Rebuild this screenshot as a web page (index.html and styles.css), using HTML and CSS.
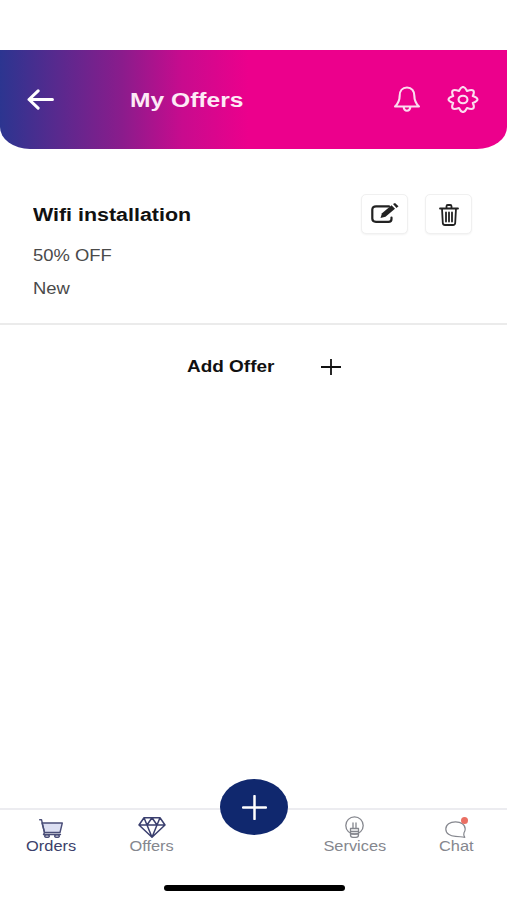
FILE: index.html
```html
<!DOCTYPE html>
<html lang="en">
<head>
<meta charset="utf-8">
<title>My Offers</title>
<link rel="stylesheet" href="styles.css">
</head>
<body>
<div class="screen">
  <header class="header">
    <svg class="back" viewBox="0 0 28 22" fill="none" stroke="#fff" stroke-width="3.200" stroke-linecap="round" stroke-linejoin="round"><path d="M2 11H26.500M11.500 2L2 11L11.500 20"/></svg>
    <h1 class="title">My Offers</h1>
    <div class="header-icons">
      <svg class="bell" viewBox="0 0 28 28" fill="none" stroke="#fbdcef" stroke-width="2.200" stroke-linecap="round" stroke-linejoin="round"><path d="M14 1.500C9 1.500 6.400 5.300 6.400 10C6.400 15.500 4.800 18 1.600 21.300H26.400C23.200 18 21.600 15.500 21.600 10C21.600 5.300 19 1.500 14 1.500ZM10.500 21.600C10.800 24.200 12 25.600 14 25.600C16 25.600 17.200 24.200 17.500 21.600"/></svg>
      <svg class="gear" viewBox="0 0 32 28" fill="none" stroke="#fbdcef" stroke-width="2.200" stroke-linejoin="round"><path d="M26.200 17.600Q30 26.200 20.200 22.800Q16 31.200 11.800 22.800Q2 26.200 5.800 17.600Q-3.800 14 5.800 10.400Q2 1.800 11.800 5.200Q16 -3.200 20.200 5.200Q30 1.800 26.200 10.400Q35.800 14 26.200 17.600Z"/><ellipse cx="16" cy="14" rx="4.600" ry="3.900"/></svg>
    </div>
  </header>

  <main class="content">
    <section class="offer">
      <div class="offer-info">
        <h2 class="offer-name">Wifi installation</h2>
        <p class="offer-line">50% OFF</p>
        <p class="offer-line">New</p>
      </div>
      <div class="offer-actions">
        <button class="icon-btn" aria-label="Edit">
          <svg class="edit-icon" viewBox="0 0 28 20" fill="none"><path d="M20.500 14.500V16C20.500 17.800 19.300 18.800 17.500 18.800H5C2.800 18.800 1.300 17.500 1.300 15.500V6.500C1.300 4.500 2.800 3.300 5 3.300H18" stroke="#222" stroke-width="2.200" stroke-linecap="round"/><path d="M9.500 15L11 10.200L20.500 2.300L24 5.800L14.500 13.800Z" fill="#222"/><path d="M22 1L24 0L27.500 3.200L25.500 5Z" fill="#222"/></svg>
        </button>
        <button class="icon-btn" aria-label="Delete">
          <svg class="trash-icon" viewBox="0 0 20 22" fill="none" stroke="#222" stroke-width="1.800" stroke-linecap="round" stroke-linejoin="round"><path d="M1 4.500H19M7.500 4.500V2.300C7.500 1.500 8 1 8.800 1H11.200C12 1 12.500 1.500 12.500 2.300V4.500M3 4.500L3.800 19C3.900 20.300 4.700 21 6 21H14C15.300 21 16.100 20.300 16.200 19L17 4.500M7 8.500V17.500M10 8.500V17.500M13 8.500V17.500"/></svg>
        </button>
      </div>
    </section>
    <button class="add-offer">
      <span class="add-label">Add Offer</span>
      <svg class="add-plus" viewBox="0 0 20 16" stroke="#111" stroke-width="1.800" fill="none"><path d="M0 8H20M10 0V16"/></svg>
    </button>
  </main>

  <nav class="tabbar">
    <a class="tab tab-active">
      <span class="glyph">
        <svg class="cart" viewBox="0 0 24 19" fill="none" stroke="#4a4e78" stroke-width="1.400" stroke-linecap="round" stroke-linejoin="round"><path d="M3 4H23.300L21 13.500H5.500Z" fill="#dcdff2"/><path d="M.7 .7H2.500L5.500 13.500L4.500 15.500H21.500"/><ellipse cx="8" cy="17" rx="2.300" ry="1.300"/><ellipse cx="18" cy="17" rx="2.300" ry="1.300"/></svg>
      </span>
      <span class="tab-label">Orders</span>
    </a>
    <a class="tab">
      <span class="glyph">
        <svg class="diamond" viewBox="0 0 28 21" fill="none" stroke="#3a3f6e" stroke-width="1.500" stroke-linejoin="round"><path d="M6 .8H22L27 8L14 20.300L1 8ZM1 8H27M6 .8L9 8L14 20.300L19 8L22 .8M9 8L14 .8L19 8"/></svg>
      </span>
      <span class="tab-label">Offers</span>
    </a>
    <div class="tab-spacer"></div>
    <a class="tab">
      <span class="glyph">
        <svg class="bulb" viewBox="0 0 19 22" fill="none" stroke="#85878e" stroke-width="1.300" stroke-linecap="round" stroke-linejoin="round"><circle cx="9.500" cy="9.500" r="8.700"/><path d="M5.500 12.500H13.500V19C13.500 20.300 12.500 21.300 11 21.300H8C6.500 21.300 5.500 20.300 5.500 19ZM5.500 15.500H13.500M5.500 18H13.500M8 7V12.500M11 7V12.500"/></svg>
      </span>
      <span class="tab-label">Services</span>
    </a>
    <a class="tab">
      <span class="glyph chat-glyph">
        <svg class="chat" viewBox="0 0 21 17" fill="none" stroke="#85878e" stroke-width="1.200" stroke-linecap="round" stroke-linejoin="round"><path d="M10.500 .8C5 .8 .8 3.500 .8 8C.8 12.500 5 15.300 10.500 15.300C13 15.300 15 15.800 19.800 16.300C18.500 14.500 18.300 13.500 19 11.800C19.800 10.500 20.200 9.300 20.200 8C20.200 3.500 16 .8 10.500 .8Z"/></svg>
        <span class="chat-dot"></span>
      </span>
      <span class="tab-label">Chat</span>
    </a>
  </nav>

  <button class="fab" aria-label="Add">
    <svg class="fab-plus" viewBox="0 0 24 24" stroke="#fff" stroke-width="2.400" stroke-linecap="round" fill="none"><path d="M1 12H23M12 1V23"/></svg>
  </button>
  <div class="home-bar"></div>
</div>
</body>
</html>
```

FILE: styles.css
```css
* { box-sizing: border-box; }
html, body { margin: 0; padding: 0; background: #fff; }
body { font-family: "Liberation Sans", Arial, sans-serif; }
.screen { position: relative; width: 507px; height: 900px; overflow: hidden; display: flex; flex-direction: column; padding-top: 50px; }

.header { height: 99px; flex: none; display: flex; align-items: center; padding: 0 28px 0 27px; border-radius: 0 0 30px 30px / 0 0 22px 22px; background: linear-gradient(90deg, #2c3590 0%, #8a1c8c 24%, #c80b8e 36%, #ec008c 49%, #ec008c 100%); }
.back { width: 27px; height: 21px; flex: none; }
.title { margin: 0 0 0 76px; color: #fdeaf6; font-size: 20px; font-weight: 700; line-height: 1; transform: scaleX(1.23); transform-origin: left center; }
.header-icons { margin-left: auto; display: flex; align-items: center; gap: 26px; }
.bell { width: 28px; height: 27px; }
.gear { width: 32px; height: 27px; }

.content { flex: 1; min-height: 0; }
.offer { height: 176px; padding: 45px 35px 0 33px; display: flex; justify-content: space-between; align-items: flex-start; border-bottom: 2px solid #ebebeb; }
.offer-info { padding-top: 11px; }
.offer-name { margin: 0 0 8px; font-size: 18px; font-weight: 700; line-height: 20px; color: #111; transform: scaleX(1.19); transform-origin: left center; }
.offer-line { margin: 0; padding-top: 13px; font-size: 16px; line-height: 20px; color: #4a4a4a; transform: scaleX(1.15); transform-origin: left center; }
.offer-actions { display: flex; gap: 17px; }
.icon-btn { width: 47px; height: 40px; padding: 0; display: flex; align-items: center; justify-content: center; background: #fff; border: 1px solid #f0f0f0; border-radius: 5px; box-shadow: 0 1px 2px rgba(0,0,0,.05); }
.edit-icon { width: 28px; height: 20px; margin-top: -2px; }
.trash-icon { width: 20px; height: 22px; margin-top: 1px; }

.add-offer { display: flex; align-items: center; margin: 32px 0 0 187px; padding: 0; border: 0; background: none; color: #111; font-family: inherit; }
.add-label { font-size: 16px; font-weight: 700; line-height: 20px; transform: scaleX(1.185); transform-origin: left center; }
.add-plus { width: 20px; height: 16px; margin-left: 60px; }

.tabbar { height: 92px; flex: none; display: grid; grid-template-columns: repeat(5, 1fr); border-top: 2px solid #ececf0; }
.tab { display: flex; flex-direction: column; align-items: center; padding-top: 7px; color: #85878e; font-size: 14.500px; line-height: 16px; }
.tab-active { color: #3b3f6b; }
.tab-label { transform: scaleX(1.13); }
.glyph { display: flex; align-items: flex-end; justify-content: center; height: 21px; }
.cart { width: 24px; height: 19px; flex: none; }
.diamond { width: 28px; height: 21px; flex: none; }
.bulb { width: 19px; height: 22px; flex: none; }
.chat { width: 21px; height: 17px; flex: none; }
.chat-glyph { position: relative; left: -1px; }
.chat-dot { position: absolute; top: 0; right: -2px; width: 7px; height: 7px; border-radius: 50%; background: #ea6f63; }

.fab { position: absolute; left: 220px; top: 779px; width: 68px; height: 56px; padding: 0; border: 0; border-radius: 50%; background: #10286e; display: flex; align-items: center; justify-content: center; }
.fab-plus { width: 25px; height: 25px; }
.home-bar { position: absolute; left: 164px; top: 885px; width: 181px; height: 6px; border-radius: 3px; background: #000; }
```
